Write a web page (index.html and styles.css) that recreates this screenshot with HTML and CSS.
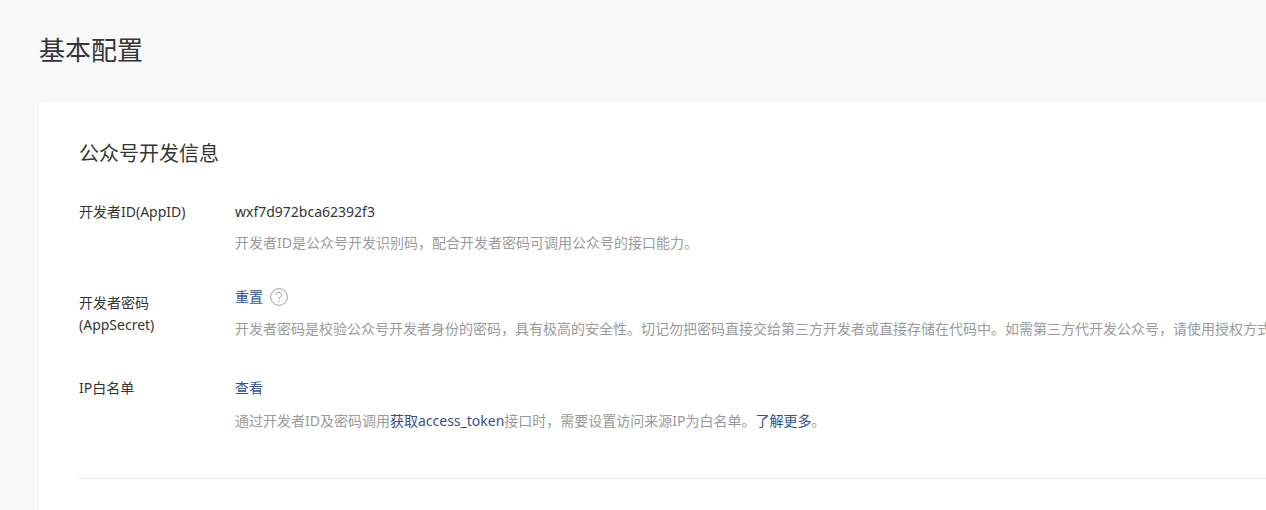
FILE: index.html
```html
<!DOCTYPE html>
<html lang="zh-CN">
<head>
    <meta charset="UTF-8">
    <meta name="viewport" content="width=device-width, initial-scale=1.0">
    <title>基本配置</title>
    <link rel="stylesheet" href="styles.css">
</head>
<body>
    <h1 class="page-title">基本配置</h1>
    <div class="card">
        <h2 class="card-title">公众号开发信息</h2>

        <div class="row">
            <div class="row-label">开发者ID(AppID)</div>
            <div class="row-body">
                <div class="row-value">wxf7d972bca62392f3</div>
                <p class="row-desc">开发者ID是公众号开发识别码，配合开发者密码可调用公众号的接口能力。</p>
            </div>
        </div>

        <div class="row row-secret">
            <div class="row-label">开发者密码<br>(AppSecret)</div>
            <div class="row-body">
                <div class="row-value">
                    <a class="link" href="#">重置</a>
                    <svg class="help-icon" width="18" height="18" viewBox="0 0 18 18" fill="none">
                        <circle cx="9" cy="9" r="8.4" stroke="#a0a0a0" stroke-width="1"/>
                        <path d="M6.2 6.9c0-1.5 1.2-2.5 2.8-2.5s2.8 1 2.8 2.3c0 1.1-.7 1.7-1.5 2.2-.8.5-1.3 1-1.3 2" stroke="#a0a0a0" stroke-width="1"/>
                        <circle cx="9" cy="13.3" r=".7" fill="#a0a0a0"/>
                    </svg>
                </div>
                <p class="row-desc">开发者密码是校验公众号开发者身份的密码，具有极高的安全性。切记勿把密码直接交给第三方开发者或直接存储在代码中。如需第三方代开发公众号，请使用授权方式接入。</p>
            </div>
        </div>

        <div class="row row-ip">
            <div class="row-label">IP白名单</div>
            <div class="row-body">
                <div class="row-value"><a class="link" href="#">查看</a></div>
                <p class="row-desc">通过开发者ID及密码调用<a class="link" href="#">获取access_token</a>接口时，需要设置访问来源IP为白名单。<a class="link" href="#">了解更多</a>。</p>
            </div>
        </div>

        <hr class="divider">
    </div>
</body>
</html>
```

FILE: styles.css
```css
html, body {
    height: 100%;
    overflow: hidden;
}
body {
    font-family: "Noto Sans", "Noto Sans CJK SC", sans-serif;
    font-size: 14px;
    margin: 0;
    padding: 0 0 0 39px;
    background-color: #f6f8f9;
    color: #353535;
}
.page-title {
    font-size: 26px;
    font-weight: 400;
    line-height: 36px;
    margin: 0;
    padding: 32px 0 34px;
}
.card {
    width: 1300px;
    background: #fff;
    border-radius: 2px;
    box-shadow: 0 1px 2px rgba(150, 150, 150, 0.1);
    padding: 38px 40px 60px;
}
.card-title {
    font-size: 20px;
    font-weight: 400;
    line-height: 28px;
    margin: 0 0 33px;
}
.row {
    display: flex;
    margin-bottom: 32px;
}
.row-ip {
    margin-bottom: 46px;
}
.row-label {
    width: 156px;
    flex-shrink: 0;
    line-height: 22px;
}
.row-secret {
    margin-bottom: 37px;
}
.row-secret .row-label {
    padding-top: 6px;
}
.row-value {
    display: flex;
    align-items: center;
    gap: 7px;
    line-height: 22px;
}
.row-desc {
    margin: 9px 0 0;
    line-height: 22px;
    color: #9a9a9a;
    white-space: nowrap;
}
.row-secret .row-desc {
    margin-top: 10px;
}
.row-ip .row-desc {
    margin-top: 11px;
}
.link {
    color: #34518f;
    text-decoration: none;
}
.divider {
    border: 0;
    border-top: 1px solid #e7e7eb;
    margin: 0;
}
```
